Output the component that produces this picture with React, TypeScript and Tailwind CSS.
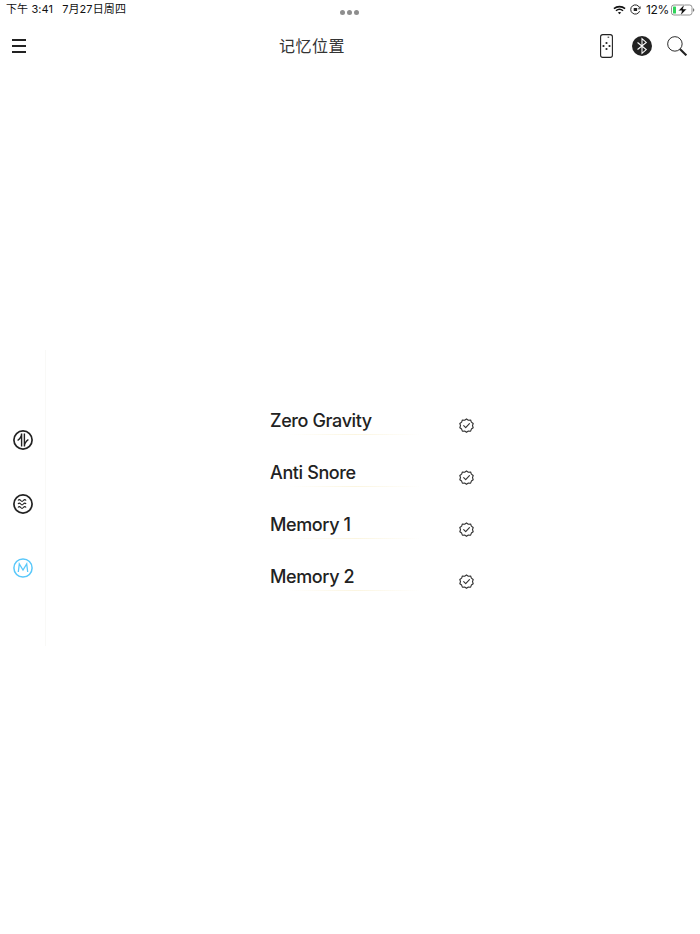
import React from "react";

const cjk = "font-['Inter','Noto_Sans_CJK_SC',sans-serif]";

function Wifi() {
  return (
    <svg width="13" height="10" viewBox="0 0 14 10" fill="none" stroke="#111" strokeWidth="1.7">
      <path d="M1 3.6C4.4.6 9.6.6 13 3.6" />
      <path d="M3.2 5.8c2.2-1.9 5.4-1.9 7.6 0" />
      <path d="M7 9.6 5.2 7.7c1-.9 2.6-.9 3.6 0z" fill="#111" stroke="none" />
    </svg>
  );
}

function RotationLock() {
  return (
    <svg width="11" height="11" viewBox="0 0 11 11" fill="none" stroke="#222" strokeWidth="1">
      <path d="M9.6 7.2A4.6 4.6 0 1 1 9.6 3.8" />
      <path d="M10.2 2.4v2.4H7.9" strokeWidth=".8" />
      <rect x="3.7" y="3.9" width="3.4" height="3" rx=".5" fill="#222" stroke="none" />
    </svg>
  );
}

function Battery() {
  return (
    <svg width="24" height="12" viewBox="0 0 24 12" fill="none">
      <rect x=".5" y="1" width="20.5" height="10" rx="2.4" stroke="#777" strokeWidth=".8" />
      <rect x="2" y="2.5" width="3" height="7" rx=".6" fill="#2fd35a" />
      <path d="M22 4.2c.9.3 1.3 1 1.3 1.8s-.4 1.500-1.300 1.800z" fill="#777" />
      <path d="M13.600.200 7.300 6.800h3.500L9.400 11.800l6.300-6.800h-3.700z" fill="#111" stroke="#fff" strokeWidth=".5" />
    </svg>
  );
}

function RemoteIcon() {
  return (
    <svg width="13" height="24" viewBox="0 0 13 24" fill="none" stroke="#222" strokeWidth="1.100">
      <rect x=".6" y=".6" width="11.800" height="22.800" rx="2.200" />
      <path d="M7.600 3.200h1.600" strokeWidth="1" />
      <g fill="#222" stroke="none">
        <circle cx="6.500" cy="9" r="1.100" />
        <circle cx="6.500" cy="15" r="1.100" />
        <circle cx="3.500" cy="12" r="1.100" />
        <circle cx="9.500" cy="12" r="1.100" />
      </g>
    </svg>
  );
}

function BluetoothIcon() {
  return (
    <svg width="20" height="20" viewBox="0 0 21 21" fill="none">
      <circle cx="10.500" cy="10.500" r="10.500" fill="#222" />
      <path d="M5.800 6.800 15 14.200l-4.500 4V2.800l4.500 4-9.200 7.400" stroke="#fff" strokeWidth="1.100" />
    </svg>
  );
}

function SearchIcon() {
  return (
    <svg width="20" height="20" viewBox="0 0 21 21" fill="none" stroke="#222">
      <circle cx="8.300" cy="8.300" r="7.600" strokeWidth="1" />
      <path d="m13.800 13.800 6.500 6.500" strokeWidth="2.200" />
    </svg>
  );
}

function WaveIconA() {
  return (
    <svg width="20" height="20" viewBox="0 0 20 20" fill="none" stroke="#222">
      <circle cx="10" cy="10" r="9.100" strokeWidth="1.700" />
      <path d="M4.600 10.500C6 9.500 8.600 6.500 8.600 3.500v13" strokeWidth="1.400" />
      <path d="M15.400 9.500C14 10.500 11.400 13.500 11.400 16.500v-13" strokeWidth="1.400" />
    </svg>
  );
}

function WaveIconB() {
  const wave = "c.9-1.200 1.800-1.200 2.700 0s1.800 1.200 2.700 0 1.800-1.200 2.700 0";
  return (
    <svg width="20" height="20" viewBox="0 0 20 20" fill="none" stroke="#222">
      <circle cx="10" cy="10" r="9.100" strokeWidth="1.700" />
      <path d={`M5 6.500${wave}`} strokeWidth="1.100" />
      <path d={`M5 10${wave}`} strokeWidth="1.100" />
      <path d={`M5 13.500${wave}`} strokeWidth="1.100" />
    </svg>
  );
}

function MemoryIcon() {
  return (
    <svg width="20" height="20" viewBox="0 0 20 20" fill="none" stroke="#5ac8fa">
      <circle cx="10" cy="10" r="9.100" strokeWidth="1.500" />
      <path d="M5.300 14 6.300 6l3.700 6 3.700-6 1 8" strokeWidth="1.300" />
    </svg>
  );
}

function CheckBadge() {
  return (
    <svg width="15" height="15" viewBox="0 0 24 24" fill="none" stroke="#333" strokeWidth="1.800" strokeLinejoin="round" strokeLinecap="round">
      <path d="m12 1.500 3 2 3.600-.3 1.200 3.400 2.900 2.200-1.100 3.400 1.100 3.400-2.900 2.100-1.200 3.400-3.600-.2-3 2-3-2-3.600.2-1.200-3.400-2.900-2.100 1.100-3.400-1.100-3.400 2.900-2.200 1.200-3.400 3.600.3z" />
      <path d="m7.500 12.300 3.200 3.200 6-6.500" />
    </svg>
  );
}

const rows = ["Zero Gravity", "Anti Snore", "Memory 1", "Memory 2"];

export default function App() {
  return (
    <div className={`w-[700px] h-[934px] bg-white overflow-hidden flex flex-col text-[#222] ${cjk}`}>
      {/* status bar */}
      <div className="h-[18px] flex items-center pt-[1px] pl-[6px] pr-[5px] text-[11px] tracking-[0.1px] text-[#111] relative">
        <span>下午 3:41</span>
        <span className="ml-[9px]">7月27日周四</span>
        <div className="ml-auto flex items-center">
          <Wifi />
          <span className="w-[4px]" />
          <RotationLock />
          <span className="text-[12px] tracking-[-0.3px] ml-[5px] mr-[2px]">12%</span>
          <Battery />
        </div>
        <div className="absolute left-[340px] top-[10px] flex gap-[2px]">
          <span className="w-[5px] h-[5px] rounded-full bg-[#8e8e8e]" />
          <span className="w-[5px] h-[5px] rounded-full bg-[#8e8e8e]" />
          <span className="w-[5px] h-[5px] rounded-full bg-[#8e8e8e]" />
        </div>
      </div>

      {/* nav */}
      <div className="h-[56px] flex items-center pl-[12px] pr-[13px]">
        <div className="w-[14px] flex flex-col gap-[4px]">
          <span className="h-[2px] bg-[#222]" />
          <span className="h-[2px] bg-[#222]" />
          <span className="h-[2px] bg-[#222]" />
        </div>
        <span className="ml-[253px] w-[66px] text-[16px] tracking-[0.5px] leading-none text-center text-[#333] whitespace-nowrap">记忆位置</span>
        <div className="ml-auto flex items-center">
          <RemoteIcon />
          <span className="w-[19px]" />
          <BluetoothIcon />
          <span className="w-[15px]" />
          <SearchIcon />
        </div>
      </div>

      {/* content */}
      <div className="flex-1 flex items-start pt-[276px]">
        <div className="w-[46px] h-[296px] border-r border-[#f9f9f7] pt-[79.500px] pl-[13px] flex flex-col gap-[44px]">
          <WaveIconA />
          <WaveIconB />
          <MemoryIcon />
        </div>
        <div className="ml-[223px] mt-[56px] flex flex-col gap-[22px]">
          {rows.map((r) => (
            <div key={r} className="w-[204px] h-[30px] flex relative">
              <span className="text-[18px] leading-[30px] pl-[1px] font-medium tracking-[-0.38px] text-[#222]">{r}</span>
              <div className="absolute left-[20px] top-[28px] w-[132px] h-px bg-gradient-to-r from-white via-[#fbf5e0] to-white" />
              <div className="absolute left-[190px] top-[12px]">
                <CheckBadge />
              </div>
            </div>
          ))}
        </div>
      </div>
    </div>
  );
}
